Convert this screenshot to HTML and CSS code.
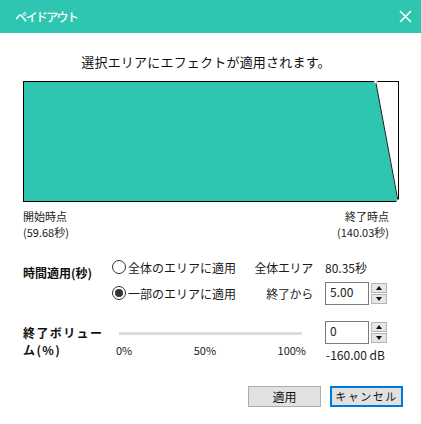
FILE: index.html
```html
<!DOCTYPE html>
<html lang="ja">
<head>
<meta charset="utf-8">
<link rel="stylesheet" href="styles.css">
</head>
<body>
<div class="dialog">
  <div class="titlebar">
    <span class="title">ペイドアウト</span>
    <svg class="close" width="13" height="13" viewBox="0 0 13 13"><path d="M1 1 L12 12 M12 1 L1 12" stroke="#fff" stroke-width="1.6" fill="none"/></svg>
  </div>
  <div class="content">
    <div class="heading">選択エリアにエフェクトが適用されます。</div>
    <svg class="graph" width="376" height="121" viewBox="0 0 376 121">
      <rect x="0.5" y="0.5" width="375" height="120" fill="#fff" stroke="#000" stroke-width="1"/>
      <polygon points="1,1 352.7,1 374.5,120 1,120" fill="#2ec6b0"/>
      <rect x="0.5" y="0.5" width="375" height="120" fill="none" stroke="#000" stroke-width="1"/>
      <line x1="352.7" y1="0.5" x2="375" y2="120" stroke="#1a1a1a" stroke-width="1"/>
      <circle cx="352.7" cy="1" r="1.6" fill="#fff" stroke="#999" stroke-width="0.8"/>
      <circle cx="375" cy="120" r="1.6" fill="#fff" stroke="#999" stroke-width="0.8"/>
    </svg>
    <div class="ends">
      <div class="end">開始時点<br>(59.68秒)</div>
      <div class="end right">終了時点<br>(140.03秒)</div>
    </div>
    <div class="time">
      <div class="sect-label time-label">時間適用(秒)</div>
      <label class="radio"><span class="circle"></span>全体のエリアに適用</label>
      <div class="rlabel">全体エリア</div>
      <div class="val">80.35秒</div>
      <label class="radio"><span class="circle on"></span>一部のエリアに適用</label>
      <div class="rlabel">終了から</div>
      <div class="val">
        <div class="spin-field">
          <div class="input">5.00</div>
          <div class="spinner">
            <div class="sbtn"><span class="up"></span></div>
            <div class="sbtn"><span class="down"></span></div>
          </div>
        </div>
      </div>
    </div>
    <div class="volume">
      <div class="sect-label vol-label">終了ボリューム(%)</div>
      <div class="slider">
        <div class="track"></div>
        <div class="scale"><span>0%</span><span>50%</span><span>100%</span></div>
      </div>
      <div class="vol-val">
        <div class="spin-field">
          <div class="input">0</div>
          <div class="spinner">
            <div class="sbtn"><span class="up"></span></div>
            <div class="sbtn"><span class="down"></span></div>
          </div>
        </div>
        <div class="db">-160.00 dB</div>
      </div>
    </div>
  </div>
  <div class="buttons">
    <button class="btn">適用</button>
    <button class="btn primary">キャンセル</button>
  </div>
</div>
</body>
</html>
```

FILE: styles.css
```css
* { box-sizing: border-box; }
html, body { margin: 0; padding: 0; background: #fff; }
body {
  width: 421px;
  height: 424px;
  overflow: hidden;
  font-family: "Noto Sans CJK JP", "Noto Sans", sans-serif;
  font-size: 11px;
  color: #1a1a1a;
}
.titlebar {
  height: 33px;
  background: #2ec6b0;
  display: flex;
  align-items: center;
  justify-content: space-between;
  padding: 0 9px 0 15px;
}
.title {
  color: #fff;
  font-size: 12px;
  letter-spacing: -1.6px;
  font-weight: 500;
}
.close { display: block; }
.content { padding: 0 22px 0 23px; }
.heading {
  margin-top: 19px;
  height: 20px;
  line-height: 20px;
  font-size: 13px;
  text-align: center;
  padding-right: 10px;
  letter-spacing: 0.2px;
  color: #111;
}
.graph { display: block; margin-top: 9px; }
.ends {
  margin-top: 6px;
  display: flex;
  justify-content: space-between;
  line-height: 16px;
  font-size: 11px;
  padding-right: 10px;
}
.end.right { text-align: right; }
.time {
  margin-top: 14px;
  display: grid;
  grid-template-columns: 89px 140px 61px auto;
  grid-template-rows: 26px 26px;
  align-items: center;
  font-size: 12px;
}
.sect-label { font-weight: bold; font-size: 12px; color: #111; }
.time-label {
  grid-row: 1 / 3;
  align-self: start;
  padding-top: 11px;
  line-height: 16px;
}
.radio { display: flex; align-items: center; gap: 2px; white-space: nowrap; }
.circle {
  width: 14px;
  height: 14px;
  border: 1px solid #333;
  border-radius: 50%;
  display: flex;
  align-items: center;
  justify-content: center;
  background: #fff;
}
.circle.on::after {
  content: "";
  width: 8px;
  height: 8px;
  border-radius: 50%;
  background: #333;
}
.rlabel { text-align: right; white-space: nowrap; letter-spacing: -0.3px; }
.val { padding-left: 12px; }
.spin-field { display: flex; align-items: flex-start; gap: 2px; }
.input {
  width: 44px;
  height: 23px;
  border: 1px solid #7a7a7a;
  padding: 1px 0 0 4px;
  font-size: 12px;
  line-height: 16px;
  background: #fff;
}
.spinner { display: flex; flex-direction: column; gap: 1px; padding-top: 1px; }
.sbtn {
  width: 16px;
  height: 10px;
  background: #e6e6e6;
  border: 1px solid #b5b5b5;
  display: flex;
  align-items: center;
  justify-content: center;
}
.up, .down { width: 0; height: 0; border-left: 3.5px solid transparent; border-right: 3.5px solid transparent; }
.up { border-bottom: 4px solid #111; }
.down { border-top: 4px solid #111; }
.volume {
  margin-top: 14px;
  display: flex;
}
.vol-label {
  width: 89px;
  padding: 4px 8px 0 0;
  line-height: 17px;
  letter-spacing: 1.4px;
}
.slider { width: 201px; padding-left: 4px; }
.track {
  margin: 12px 0 0 3px;
  width: 183px;
  height: 3px;
  background: #dcdcdc;
}
.scale {
  margin-top: 7px;
  width: 190px;
  display: flex;
  justify-content: space-between;
  line-height: 16px;
  font-size: 11px;
}
.vol-val { margin-left: 12px; padding-top: 1px; }
.db { margin-top: 3px; line-height: 16px; font-size: 12px; padding-left: 1px; }
.buttons {
  margin-top: 23px;
  display: flex;
  justify-content: flex-end;
  gap: 9px;
  padding-right: 18px;
}
.btn {
  width: 73px;
  height: 21px;
  font-family: inherit;
  font-size: 12px;
  background: #e1e1e1;
  border: 1px solid #adadad;
  color: #111;
  padding: 0;
  line-height: 17px;
}
.btn.primary { border: 2px solid #0078d7; font-size: 11px; letter-spacing: 1.5px; }
```
